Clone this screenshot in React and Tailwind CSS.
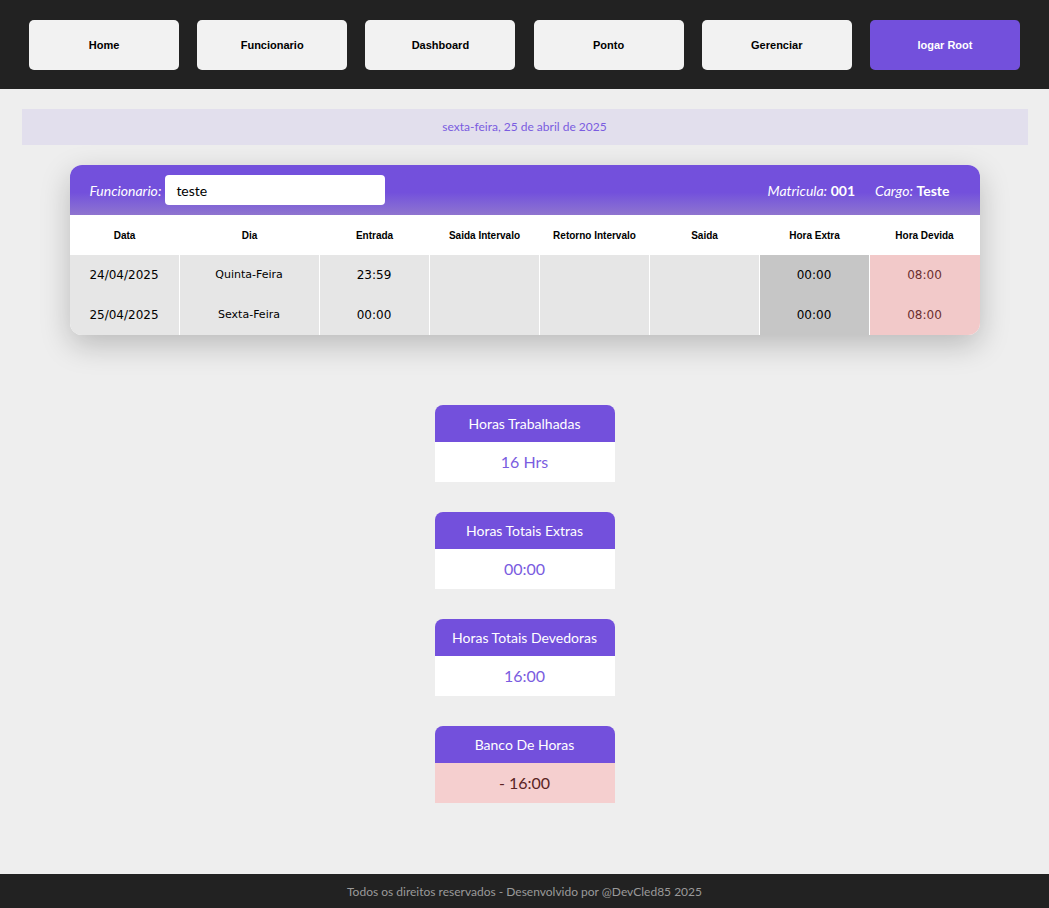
import React from 'react';

const navItems = ['Home', 'Funcionario', 'Dashboard', 'Ponto', 'Gerenciar'];

const columns = [
  { label: 'Data', w: 'w-[110px]' },
  { label: 'Dia', w: 'w-[140px]' },
  { label: 'Entrada', w: 'w-[110px]' },
  { label: 'Saida Intervalo', w: 'w-[110px]' },
  { label: 'Retorno Intervalo', w: 'w-[110px]' },
  { label: 'Saida', w: 'w-[110px]' },
  { label: 'Hora Extra', w: 'w-[110px]' },
  { label: 'Hora Devida', w: 'w-[110px]' },
];

const rows = [
  { data: '24/04/2025', dia: 'Quinta-Feira', entrada: '23:59', extra: '00:00', devida: '08:00' },
  { data: '25/04/2025', dia: 'Sexta-Feira', entrada: '00:00', extra: '00:00', devida: '08:00' },
];

const resumo = [
  { title: 'Horas Trabalhadas', value: '16 Hrs' },
  { title: 'Horas Totais Extras', value: '00:00' },
  { title: 'Horas Totais Devedoras', value: '16:00' },
  { title: 'Banco De Horas', value: '- 16:00', negative: true },
];

const App = () => {
  return (
    <div className="min-h-[908px] flex flex-col bg-[#eeeeee] font-['Lato',sans-serif]">
      {/* Nav */}
      <nav className="h-[89px] bg-[#222222] flex items-center justify-between px-[29px]">
        {navItems.map((item) => (
          <button
            key={item}
            className="w-[150px] h-[50px] pt-[1px] rounded-[5px] bg-[#f2f2f2] text-black text-[11px] font-bold font-['Liberation_Sans',sans-serif]"
          >
            {item}
          </button>
        ))}
        <button className="w-[150px] h-[50px] pt-[1px] rounded-[5px] bg-[#7350dc] text-white text-[11px] font-bold font-['Liberation_Sans',sans-serif]">
          logar Root
        </button>
      </nav>

      <main className="flex-1 flex flex-col items-center pt-[20px] pb-[71px]">
        <div className="w-[1006px] h-[36px] bg-[#e2dfed] flex items-center justify-center text-[12px] text-[#7a5ce0]">
          sexta-feira, 25 de abril de 2025
        </div>

        {/* Tabela */}
        <div className="mt-[20px] w-[910px] rounded-[12px] overflow-hidden bg-white shadow-[0_10px_30px_rgba(0,0,0,0.22)]">
          <div className="h-[50px] flex items-center justify-between pl-[20px] pr-[30px] bg-gradient-to-b from-[#7350dc] via-[#7350dc] via-55% to-[#8f74cf] text-white text-[14px]">
            <div className="flex items-center gap-[4px]">
              <span className="italic">Funcionario:</span>
              <input
                readOnly
                value="teste"
                className="w-[220px] h-[30px] rounded-[4px] bg-white text-black text-[14px] px-[11px] outline-none"
              />
            </div>
            <div className="flex items-center gap-[20px]">
              <span>
                <span className="italic">Matricula:</span> <span className="font-bold">001</span>
              </span>
              <span>
                <span className="italic">Cargo:</span> <span className="font-bold">Teste</span>
              </span>
            </div>
          </div>

          <div className="flex h-[40px] bg-white">
            {columns.map((c) => (
              <div
                key={c.label}
                className={`${c.w} flex items-center justify-center text-[10px] font-bold text-black font-['Liberation_Sans',sans-serif]`}
              >
                {c.label}
              </div>
            ))}
          </div>

          {rows.map((r) => (
            <div key={r.data} className="flex h-[40px] text-[12px] text-black font-['DejaVu_Sans',sans-serif]">
              <div className="w-[110px] flex items-center justify-center bg-[#e6e6e6] border-r border-white">{r.data}</div>
              <div className="w-[140px] flex items-center justify-center bg-[#e6e6e6] border-r border-white text-[11px]">{r.dia}</div>
              <div className="w-[110px] flex items-center justify-center bg-[#e6e6e6] border-r border-white">{r.entrada}</div>
              <div className="w-[110px] bg-[#e6e6e6] border-r border-white"></div>
              <div className="w-[110px] bg-[#e6e6e6] border-r border-white"></div>
              <div className="w-[110px] bg-[#e6e6e6] border-r border-white"></div>
              <div className="w-[110px] flex items-center justify-center bg-[#c6c6c6] border-r border-white">{r.extra}</div>
              <div className="w-[110px] flex items-center justify-center bg-[#f2c9c9] text-[#6b2f2f]">{r.devida}</div>
            </div>
          ))}
        </div>

        {/* Resumo */}
        <div className="mt-[70px] flex flex-col gap-[30px]">
          {resumo.map((item) => (
            <div key={item.title} className="w-[180px]">
              <div className="h-[37px] rounded-t-[8px] bg-[#7350dc] text-white text-[14px] flex items-center justify-center">
                {item.title}
              </div>
              <div
                className={`h-[40px] flex items-center justify-center text-[16px] ${
                  item.negative ? 'bg-[#f5cfcf] text-[#5a2424]' : 'bg-white text-[#7a5ce0]'
                }`}
              >
                {item.value}
              </div>
            </div>
          ))}
        </div>
      </main>

      <footer className="h-[34px] bg-[#222222] flex items-center justify-center text-[12px] text-[#9a9a9a] pt-[2px]">
        Todos os direitos reservados - Desenvolvido por @DevCled85 2025
      </footer>
    </div>
  );
};

export default App;
